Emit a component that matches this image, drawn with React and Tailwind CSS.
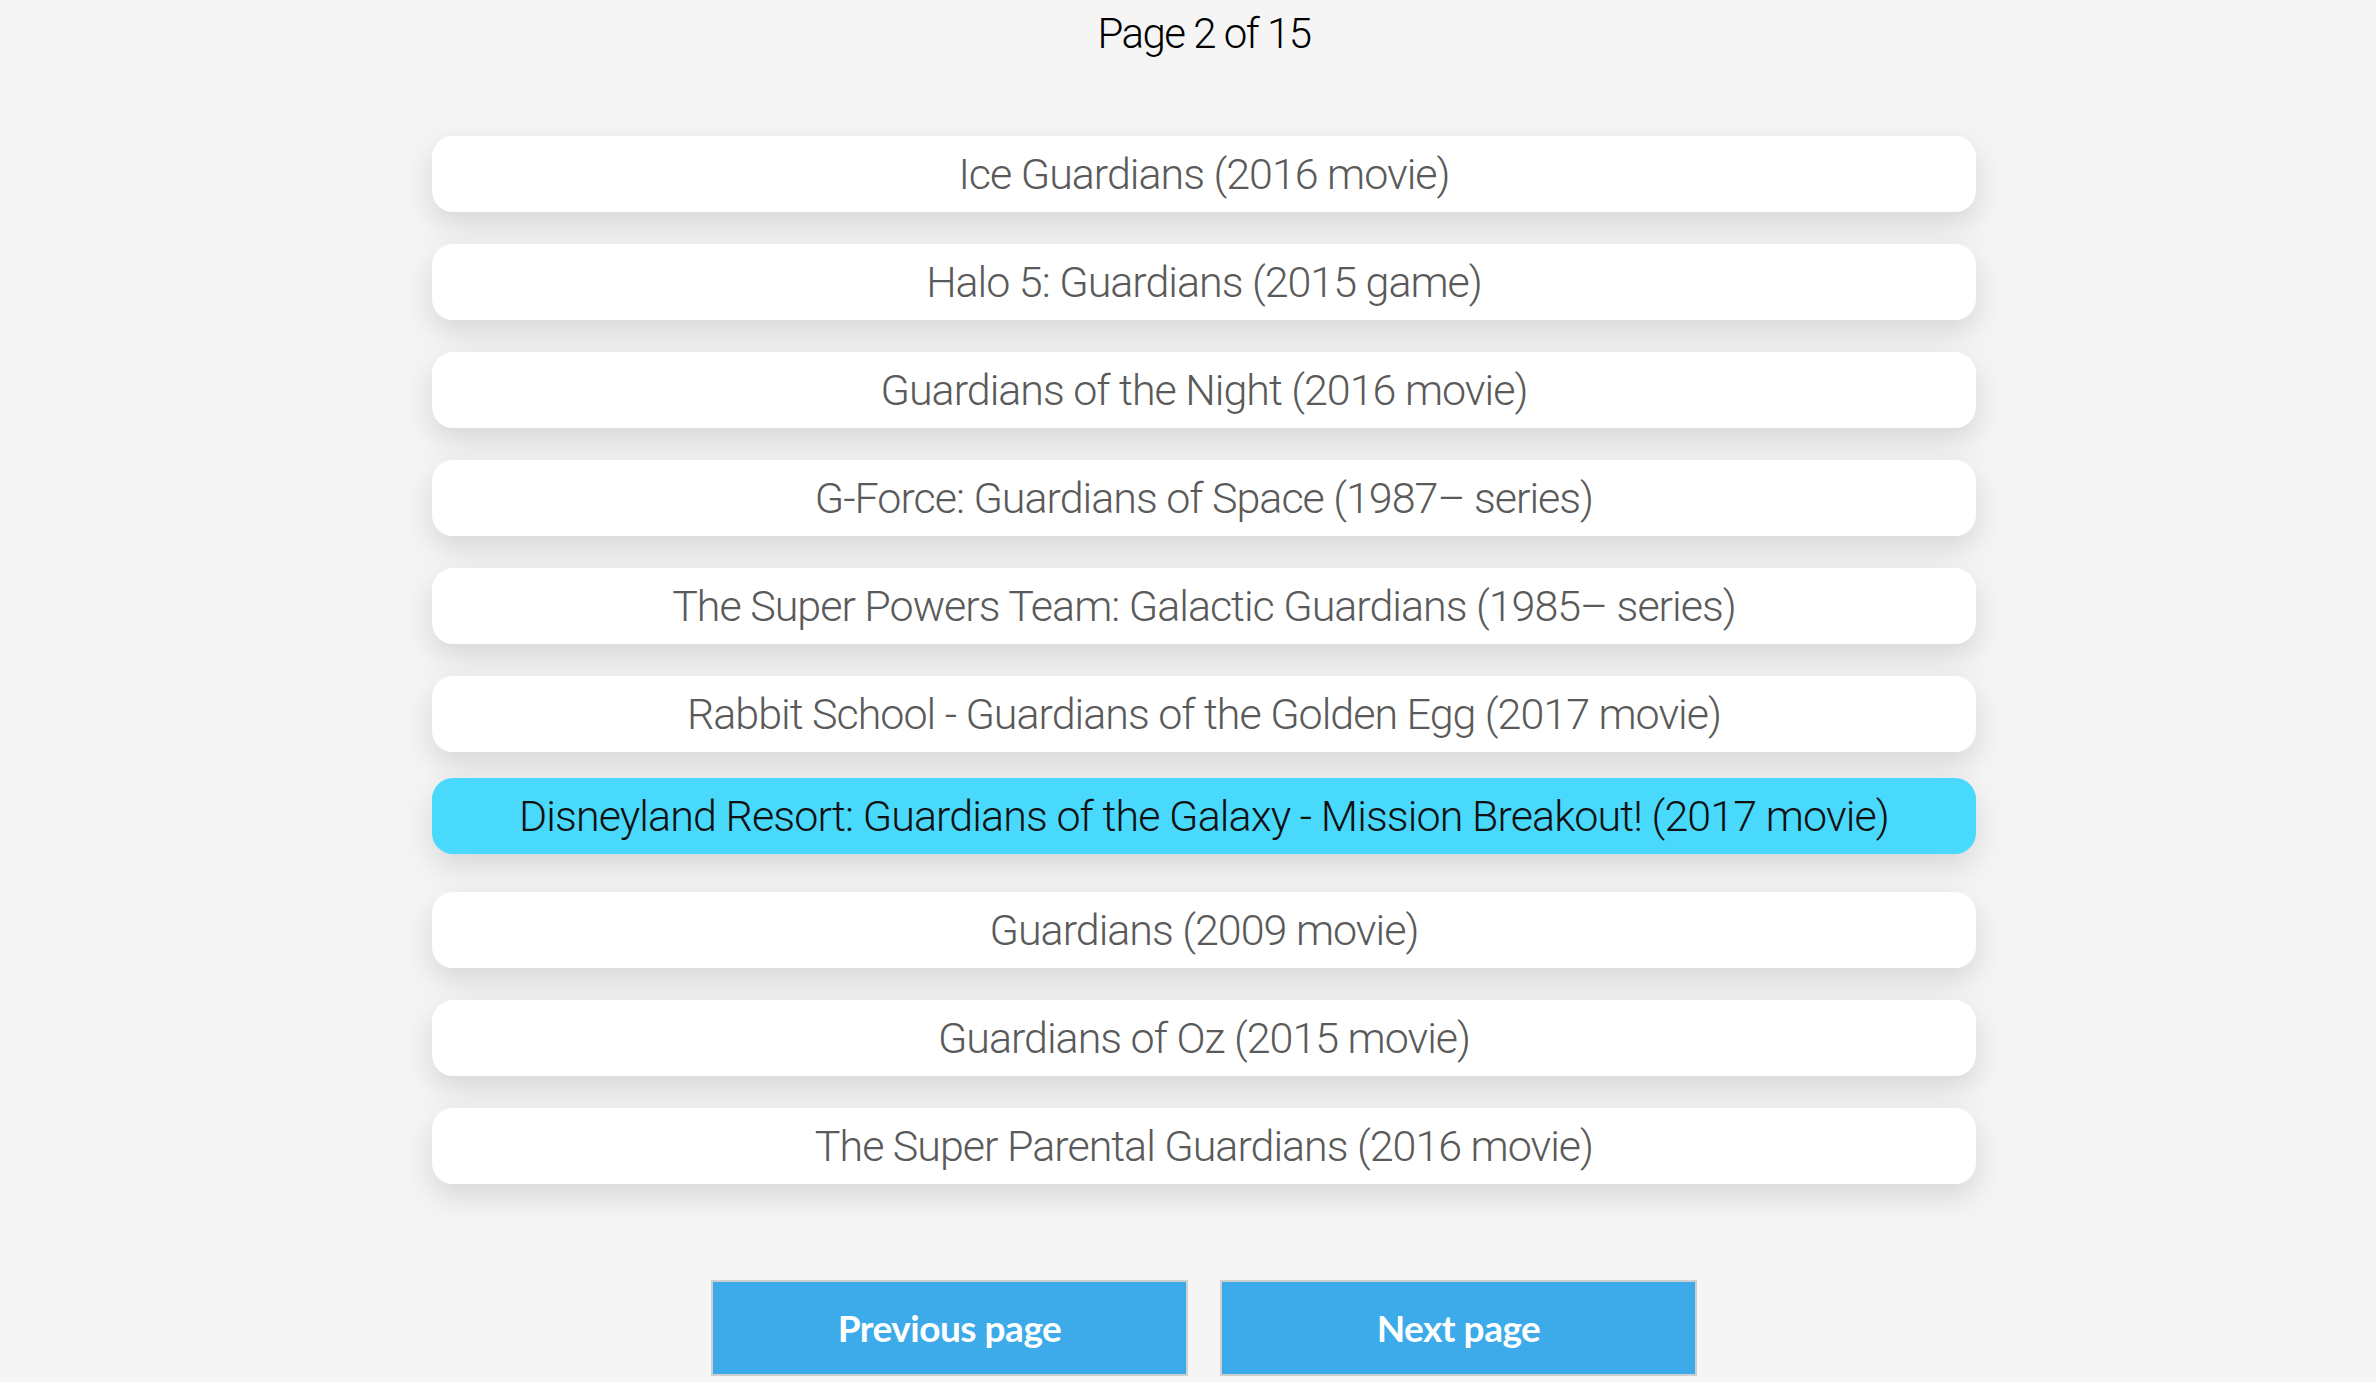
import React from 'react';

const results = [
  'Ice Guardians (2016 movie)',
  'Halo 5: Guardians (2015 game)',
  'Guardians of the Night (2016 movie)',
  'G-Force: Guardians of Space (1987– series)',
  'The Super Powers Team: Galactic Guardians (1985– series)',
  'Rabbit School - Guardians of the Golden Egg (2017 movie)',
  'Disneyland Resort: Guardians of the Galaxy - Mission Breakout! (2017 movie)',
  'Guardians (2009 movie)',
  'Guardians of Oz (2015 movie)',
  'The Super Parental Guardians (2016 movie)',
];

const selected = 6;

export default function App() {
  return (
    <div
      className="min-h-screen bg-[#f5f5f5] pl-8 flex flex-col items-center"
      style={{ fontFamily: 'Roboto, "Noto Sans", sans-serif' }}
    >
      <h1 className="pt-[4px] text-[42px] leading-[60px] font-light text-black tracking-[-1.5px]">
        Page 2 of 15
      </h1>

      {/* Results list */}
      <div className="mt-[72px] w-[1544px] flex flex-col gap-8">
        {results.map((title, i) => (
          <div
            key={title}
            className={
              i === selected
                ? 'h-[76px] -mt-[6px] mb-[6px] rounded-[21px] bg-[#48d9fd] flex items-center justify-center text-[43px] font-light text-[#111] tracking-[-0.9px] shadow-[0_12px_32px_rgba(0,0,0,0.13)]'
                : 'h-[76px] rounded-[21px] bg-white flex items-center justify-center text-[43px] font-light text-[#5a5a5a] tracking-[-1px] shadow-[0_12px_32px_rgba(0,0,0,0.13)]'
            }
          >
            {title}
          </div>
        ))}
      </div>

      {/* Pagination */}
      <div className="mt-[96px] flex gap-8">
        <button
          className="w-[477px] h-[96px] bg-[#3dabe9] border-2 border-[#cfcfcf] text-white text-[37px] font-bold tracking-[-0.5px]"
          style={{ fontFamily: 'Lato, "Open Sans", sans-serif' }}
        >
          Previous page
        </button>
        <button
          className="w-[477px] h-[96px] bg-[#3dabe9] border-2 border-[#cfcfcf] text-white text-[37px] font-bold tracking-[-0.5px]"
          style={{ fontFamily: 'Lato, "Open Sans", sans-serif' }}
        >
          Next page
        </button>
      </div>
    </div>
  );
}
